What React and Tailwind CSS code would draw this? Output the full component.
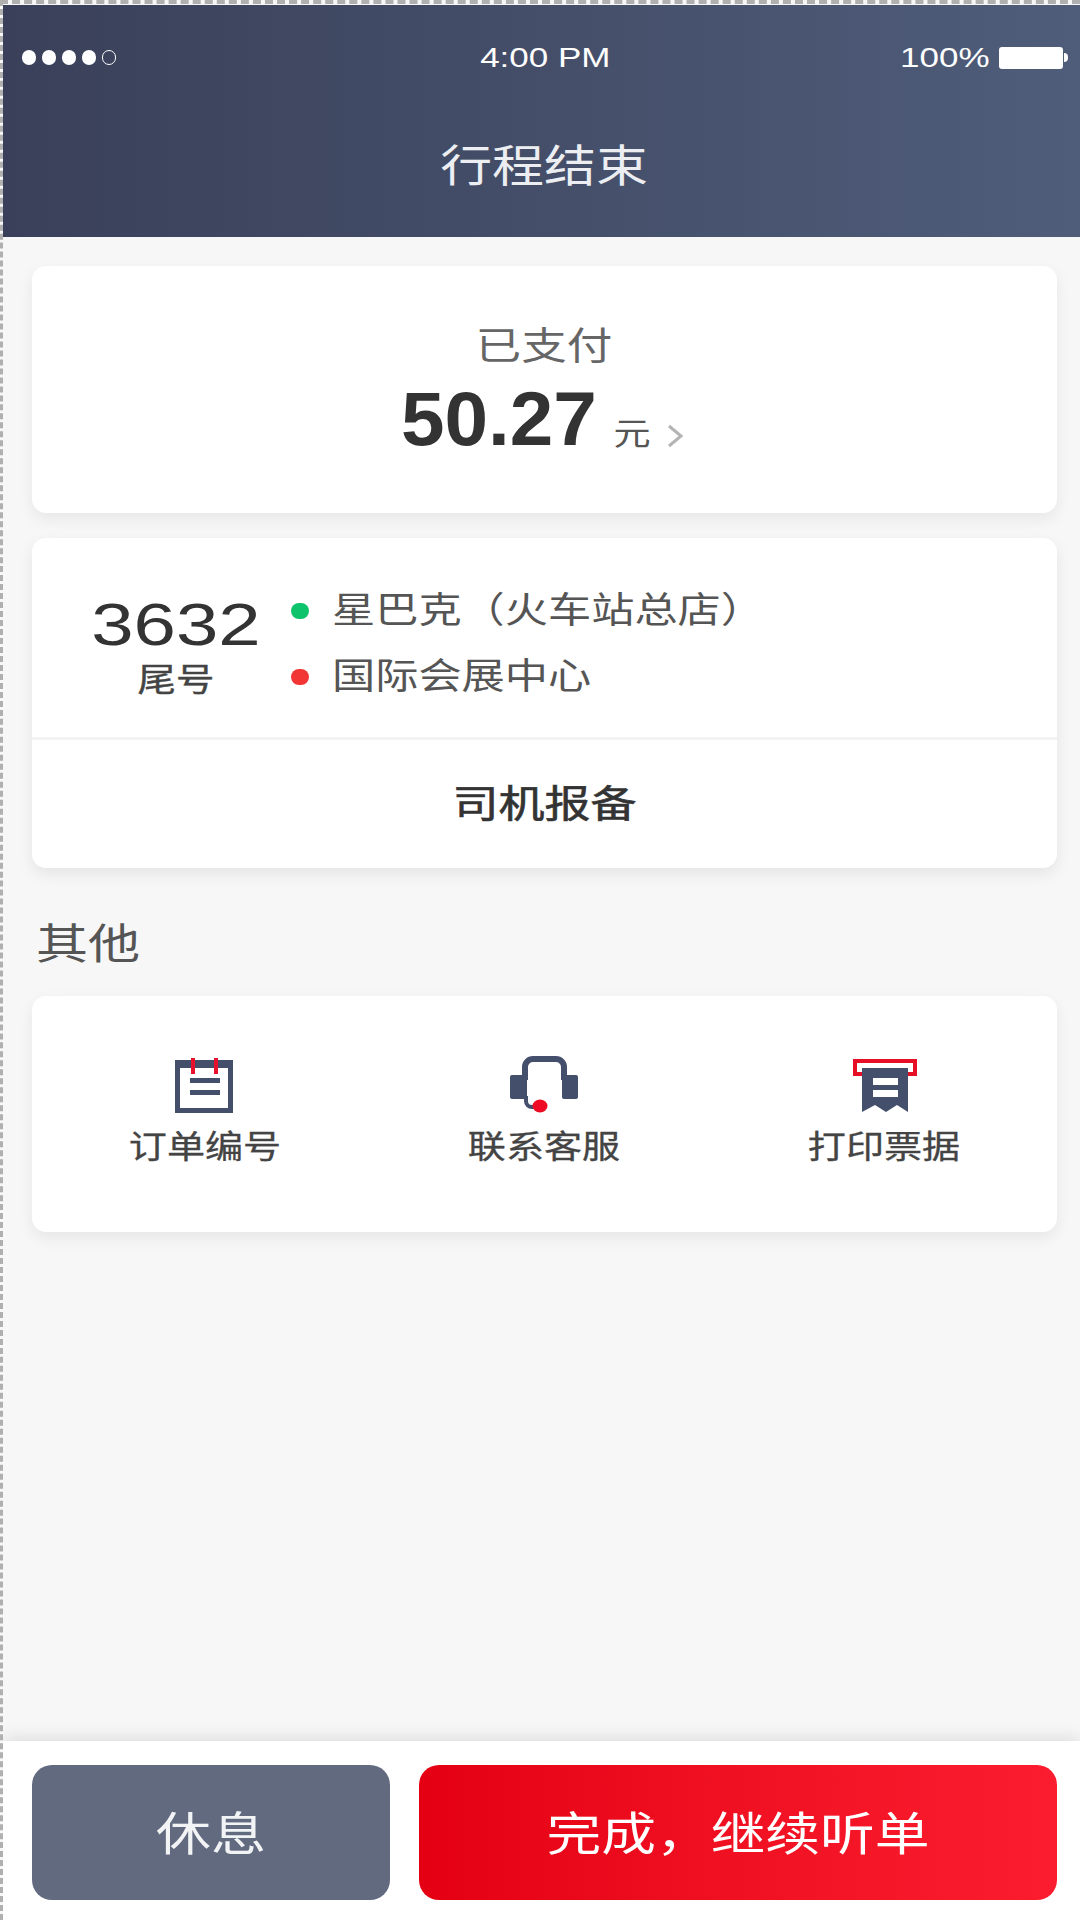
import React from 'react';

const OrderIcon = () => (
  <svg width="80" height="64" viewBox="0 0 80 64" fill="none">
    <rect x="12.5" y="6.5" width="53" height="48" stroke="#444f6c" strokeWidth="5" />
    <rect x="10" y="6" width="58" height="6" fill="#444f6c" />
    <path d="M28 2v16M51 2v16" stroke="#e8112d" strokeWidth="4" />
    <path d="M25 24.5h30M25 36.5h30" stroke="#444f6c" strokeWidth="5" />
  </svg>
);

const ServiceIcon = () => (
  <svg width="80" height="64" viewBox="0 0 80 64" fill="none">
    <rect x="6" y="19" width="17" height="24" rx="2" fill="#444f6c" />
    <rect x="58" y="19" width="16" height="24" rx="2" fill="#444f6c" />
    <path d="M21 24V11a8 8 0 0 1 8-8h23a8 8 0 0 1 8 8v13" stroke="#444f6c" strokeWidth="6" />
    <path d="M22 40v5a6 6 0 0 0 6 6h8" stroke="#444f6c" strokeWidth="4" />
    <ellipse cx="36" cy="50" rx="7.5" ry="6.5" fill="#ee0a22" />
  </svg>
);

const ReceiptIcon = () => (
  <svg width="80" height="64" viewBox="0 0 80 64" fill="none">
    <rect x="11" y="5" width="60" height="13" stroke="#e60f26" strokeWidth="4" />
    <path d="M18 12h46v44l-11-7-11 7-11-7-13 7z" fill="#444f6c" />
    <rect x="29" y="22" width="25" height="7" fill="#fff" />
    <rect x="29" y="34" width="25" height="7" fill="#fff" />
  </svg>
);

const actions = [
  { label: '订单编号', Icon: OrderIcon },
  { label: '联系客服', Icon: ServiceIcon },
  { label: '打印票据', Icon: ReceiptIcon },
];

export default function App() {
  return (
    <div className="w-[1080px] h-[1920px] flex flex-col overflow-hidden border-t-[4px] border-l-[3px] border-dashed border-[#b0b0b0] bg-[#f7f7f7] font-['Liberation_Sans','Noto_Sans_CJK_SC',sans-serif]">
      <header className="h-[232px] mt-px shrink-0 bg-gradient-to-r from-[#3a4059] to-[#4f5d7a] text-white">
        <div className="grid grid-cols-3 items-center pt-[31px] pl-[19px] pr-[12px] h-[74px]">
          <div className="flex items-center gap-[6px]">
            <span className="w-[14px] h-[15px] rounded-full bg-white" />
            <span className="w-[14px] h-[15px] rounded-full bg-white" />
            <span className="w-[14px] h-[15px] rounded-full bg-white" />
            <span className="w-[14px] h-[15px] rounded-full bg-white" />
            <span className="w-[14px] h-[15px] rounded-full border border-white" />
          </div>
          <div className="text-center text-[28px] leading-none scale-x-[1.25]">4:00 PM</div>
          <div className="flex items-center justify-end gap-[9px]">
            <span className="text-[28px] leading-none scale-x-[1.25] origin-right">100%</span>
            <div className="flex items-center">
              <span className="w-[64px] h-[22px] rounded-[3px] bg-white" />
              <span className="w-[4px] h-[9px] ml-px rounded-r-full bg-white" />
            </div>
          </div>
        </div>
        <h1 className="mt-[62px] ml-[5px] text-center text-[44px] leading-[52px] font-normal scale-x-[1.18] text-[#eceef2]">行程结束</h1>
      </header>

      <main className="flex-1 pt-[29px] pl-[29px] pr-[23px]">
        <section className="h-[247px] rounded-[14px] bg-white shadow-[0_6px_16px_rgba(0,0,0,0.07)] flex flex-col items-center pt-[56px]">
          <div className="text-[38px] leading-[48px] text-[#666] scale-x-[1.2]">已支付</div>
          <div className="mt-[11px] ml-[-4px] flex items-baseline">
            <span className="text-[76px] leading-[76px] font-bold text-[#333] origin-left scale-x-[1.03]">50.27</span>
            <span className="ml-[24px] text-[32px] leading-none text-[#555] scale-x-[1.16]">元</span>
            <svg className="ml-[18px] self-center mt-[34px]" width="18" height="26" viewBox="0 0 18 26" fill="none">
              <path d="M3 3l12 10L3 23" stroke="#b4b4b4" strokeWidth="3" />
            </svg>
          </div>
        </section>

        <section className="mt-[25px] rounded-[14px] bg-white shadow-[0_6px_16px_rgba(0,0,0,0.08)]">
          <div className="h-[202px] border-b-[3px] border-[#f3f3f3] flex items-center">
            <div className="w-[259px] pl-[29px] text-center mt-[15px]">
              <div className="text-[60px] leading-[64px] text-[#333] scale-x-[1.27]">3632</div>
              <div className="mt-[5px] text-[32px] leading-[36px] text-[#444] scale-x-[1.2] [-webkit-text-stroke:0.4px_#444]">尾号</div>
            </div>
            <div className="flex flex-col gap-[24px] mt-[12px]">
              <div className="flex items-center">
                <span className="w-[18px] h-[16px] rounded-full bg-[#0dc46c]" />
                <span className="ml-[23px] text-[36px] leading-[42px] text-[#555] origin-left scale-x-[1.2]">星巴克（火车站总店）</span>
              </div>
              <div className="flex items-center">
                <span className="w-[18px] h-[16px] rounded-full bg-[#f23535]" />
                <span className="ml-[23px] text-[36px] leading-[42px] text-[#555] origin-left scale-x-[1.2]">国际会展中心</span>
              </div>
            </div>
          </div>
          <div className="h-[128px] flex items-center justify-center text-[38px] text-[#333] scale-x-[1.21] [-webkit-text-stroke:0.6px_#333]">司机报备</div>
        </section>

        <h2 className="mt-[50px] ml-[4px] text-[42px] leading-[54px] font-normal text-[#555] origin-left scale-x-[1.24]">其他</h2>

        <section className="mt-[24px] h-[236px] rounded-[14px] bg-white shadow-[0_6px_16px_rgba(0,0,0,0.07)] grid grid-cols-3 px-[3px] pt-[60px]">
          {actions.map(({ label, Icon }) => (
            <div key={label} className="flex flex-col items-center">
              <Icon />
              <span className="mt-[9px] text-[32px] leading-[36px] text-[#444] scale-x-[1.19] [-webkit-text-stroke:0.3px_#444]">{label}</span>
            </div>
          ))}
        </section>
      </main>

      <footer className="h-[179px] shrink-0 bg-white shadow-[0_-4px_16px_rgba(0,0,0,0.1)] pt-[24px] pl-[29px] pr-[23px] flex gap-[29px]">
        <button className="w-[358px] h-[135px] rounded-[20px] bg-[#626a80] flex items-center justify-center pt-[3px] text-[46px] text-[#f2f3f5]">
          <span className="scale-x-[1.2]">休息</span>
        </button>
        <button className="flex-1 h-[135px] rounded-[20px] bg-gradient-to-r from-[#e40012] to-[#fc1c2f] flex items-center justify-center pt-[3px] text-[46px] text-white">
          <span className="scale-x-[1.19]">完成，继续听单</span>
        </button>
      </footer>
    </div>
  );
}
